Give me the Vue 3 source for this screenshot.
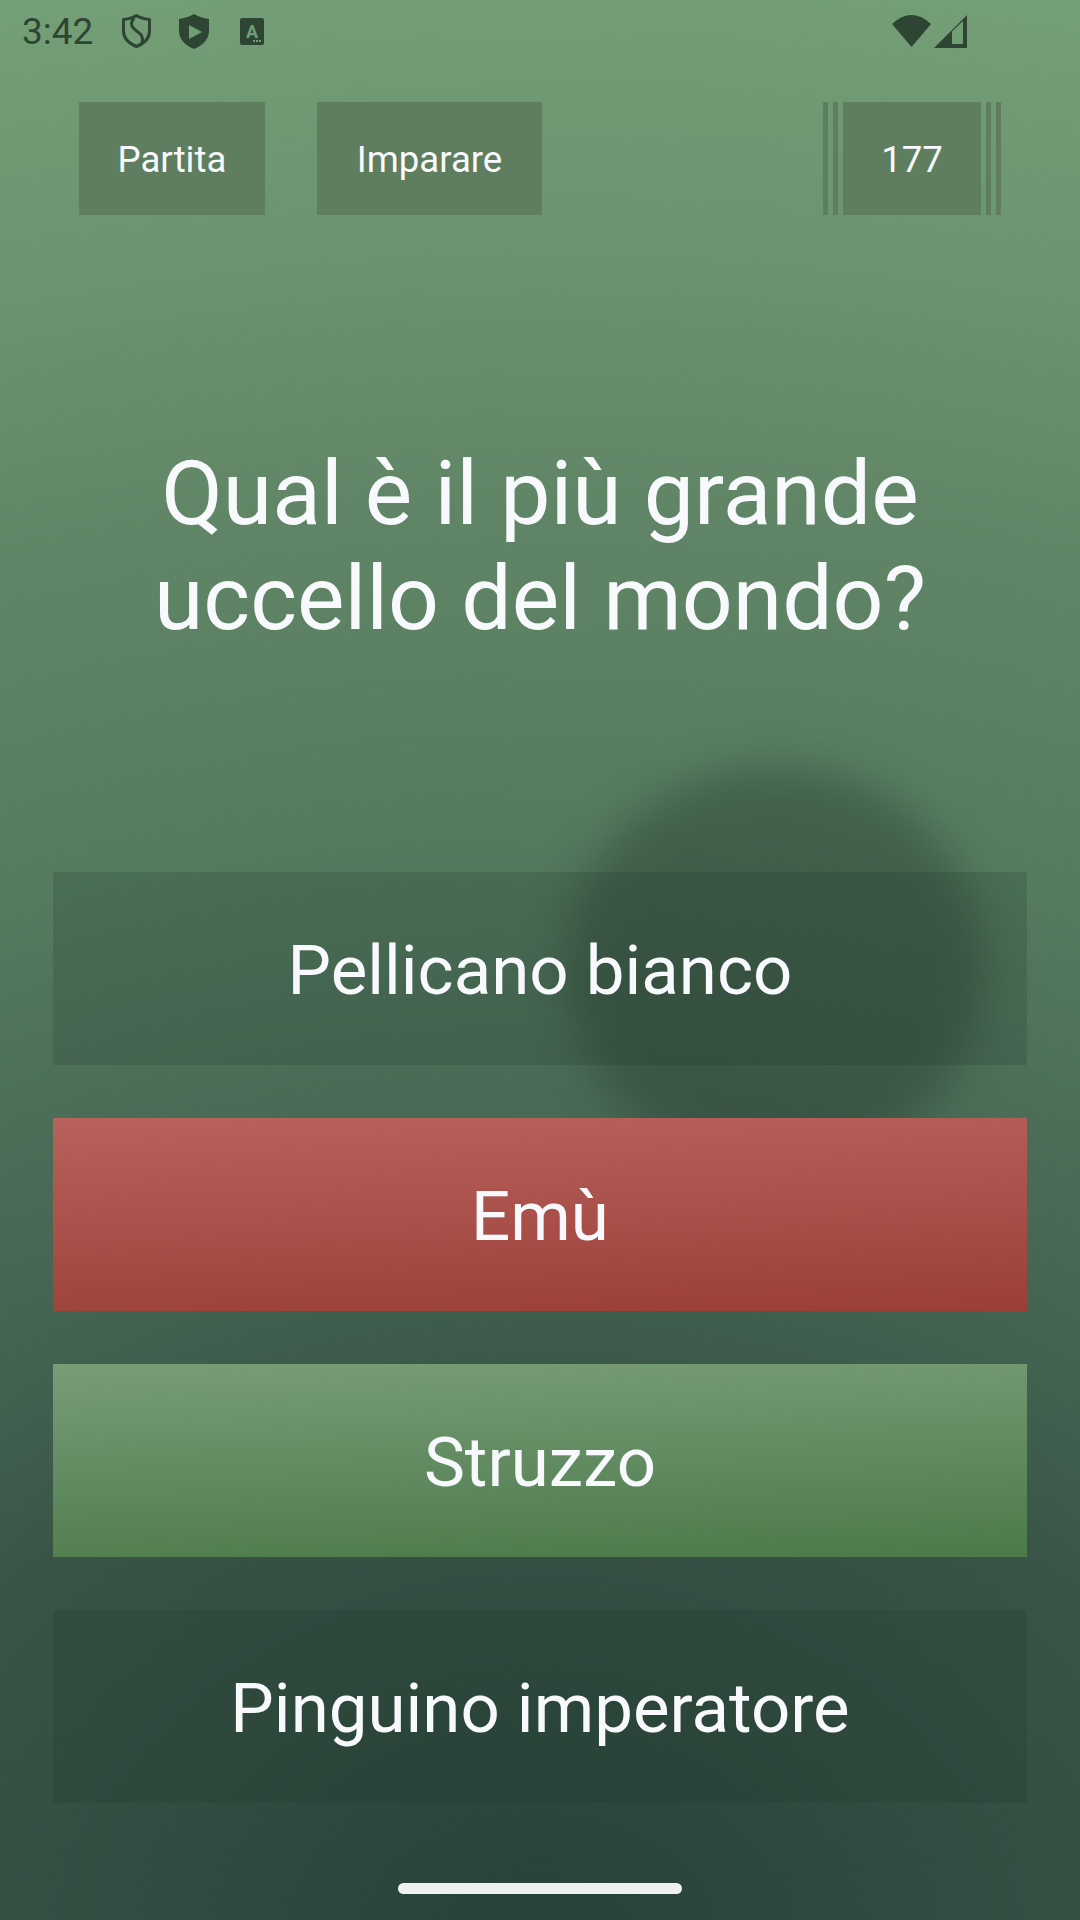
<script setup>
const answers = [
  { text: 'Pellicano bianco', kind: 'plain', ripple: true },
  { text: 'Emù', kind: 'wrong' },
  { text: 'Struzzo', kind: 'right' },
  { text: 'Pinguino imperatore', kind: 'plain' },
]
</script>

<template>
  <div class="screen">
    <header class="status">
      <div class="status-left">
        <span class="clock">3:42</span>
        <svg class="ic shield-s" viewBox="0 0 29 34" width="29" height="34">
          <path d="M14.500 1.500 C18 4 23 5 27.500 5.500 V17 C27.500 24 22 29.500 14.500 32.500 C7 29.500 1.500 24 1.500 17 V5.500 C6 5 11 4 14.500 1.500 Z" fill="none" stroke="#2f4534" stroke-width="3" stroke-linejoin="round"/>
          <path d="M12 4 C8 9 9 13 14 16.500 C20 20.500 22 24 19.500 30" fill="none" stroke="#2f4534" stroke-width="3"/>
        </svg>
        <svg class="ic shield-p" viewBox="0 0 30 35" width="30" height="35">
          <path fill-rule="evenodd" d="M15 0 C19 2.500 25 4.500 30 5 V17 C30 25 24 31.500 15 35 C6 31.500 0 25 0 17 V5 C5 4.500 11 2.500 15 0 Z M10 11 V25 L23 18 Z" fill="#2f4534"/>
        </svg>
        <svg class="ic a-box" viewBox="0 0 24 27" width="24" height="27">
          <rect width="24" height="27" rx="2" fill="#2f4534"/>
          <text x="12" y="20" text-anchor="middle" class="a-letter">A</text>
          <rect x="13" y="22" width="2" height="2" fill="#72a076"/>
          <rect x="16" y="22" width="2" height="2" fill="#72a076"/>
          <rect x="19" y="22" width="2" height="2" fill="#72a076"/>
        </svg>
      </div>
      <div class="status-right">
        <svg viewBox="0 0 39 32" width="39" height="32">
          <path d="M0 9 Q19.500 -9 39 9 L19.500 32 Z" fill="#2f4534"/>
        </svg>
        <svg viewBox="0 0 33 33" width="33" height="33">
          <path fill-rule="evenodd" d="M33 0 V33 H0 Z M29 6 L18 16.500 V29 H29 Z" fill="#2f4534"/>
        </svg>
      </div>
    </header>

    <nav class="topbar">
      <button class="tab partita">Partita</button>
      <button class="tab imparare">Imparare</button>
      <div class="score">
        <i class="stripe"></i><i class="stripe"></i>
        <span class="score-main">177</span>
        <i class="stripe"></i><i class="stripe"></i>
      </div>
    </nav>

    <h1 class="question">Qual è il più grande<br>uccello del mondo?</h1>

    <section class="answers">
      <button v-for="a in answers" :key="a.text" class="answer" :class="a.kind">
        <span v-if="a.ripple" class="ripple"></span>
        <span class="label">{{ a.text }}</span>
      </button>
    </section>

    <div class="home"></div>
  </div>
</template>

<style>
html, body { margin: 0; padding: 0; }
</style>

<style scoped>
.screen {
  width: 1080px;
  height: 1920px;
  box-sizing: border-box;
  overflow: hidden;
  display: flex;
  flex-direction: column;
  font-family: Roboto, "Liberation Sans", sans-serif;
  color: #f8f9fc;
  background: radial-gradient(ellipse 2600px 2000px at 540px 1950px,
    #28423a 0%, #2a453b 5.500%, #3a5547 27.500%, #426250 35%, #4c6e57 46%,
    #567c5f 57.500%, #608566 72%, #6a9370 85%, #729d75 97.500%, #76a278 100%);
}
.status {
  height: 62px;
  padding: 0 0 0 22px;
  display: flex;
  align-items: center;
  justify-content: space-between;
  color: #2f4534;
}
.status-left { display: flex; align-items: center; }
.clock { font-size: 37px; width: 100px; color: #2f4534; }
.ic { display: block; }
.shield-p { margin-left: 28px; }
.a-box { margin-left: 31px; }
.a-letter {
  font: 700 18px Roboto, sans-serif;
  fill: #72a076;
}
.status-right {
  display: flex;
  align-items: center;
  gap: 3px;
  padding-right: 113px;
}
.topbar {
  margin-top: 40px;
  height: 113px;
  padding: 0 79px;
  display: flex;
}
.tab {
  border: 0;
  padding: 2px 0 0;
  margin: 0;
  background: #5e7e5f;
  color: #f8f9fc;
  font: 400 36.600px Roboto, sans-serif;
}
.partita { width: 186px; }
.imparare { width: 225px; margin-left: 52px; }
.score {
  margin-left: auto;
  display: flex;
  gap: 5px;
  width: 178px;
}
.stripe { width: 5px; background: #5e7e5f; }
.score-main {
  width: 138px;
  padding-top: 2px;
  box-sizing: border-box;
  background: #5e7e5f;
  display: flex;
  align-items: center;
  justify-content: center;
  font-size: 36.600px;
}
.question {
  margin: 226px 0 0;
  font-weight: 400;
  font-size: 89.500px;
  line-height: 105px;
  text-align: center;
  color: #f8f9fc;
}
.answers {
  margin-top: 221px;
  padding: 0 53px;
  display: flex;
  flex-direction: column;
  gap: 53px;
}
.answer {
  position: relative;
  height: 193px;
  padding: 3px 0 0;
  border: 0;
  color: #f8f9fc;
  font: 400 69px Roboto, sans-serif;
  background: rgba(30, 50, 40, 0.18);
}
.label { position: relative; }
.ripple {
  position: absolute;
  left: 512px;
  top: -106px;
  width: 420px;
  height: 404px;
  border-radius: 50%;
  background: rgba(30, 45, 35, 0.34);
  filter: blur(22px);
}
.wrong { background: linear-gradient(178deg, #b8625b, #993f38); }
.right { background: linear-gradient(178deg, #789c78, #4c7a4a); }
.home {
  margin: 80px auto 0;
  width: 284px;
  height: 11px;
  border-radius: 5.500px;
  background: #eef1ef;
}
</style>
